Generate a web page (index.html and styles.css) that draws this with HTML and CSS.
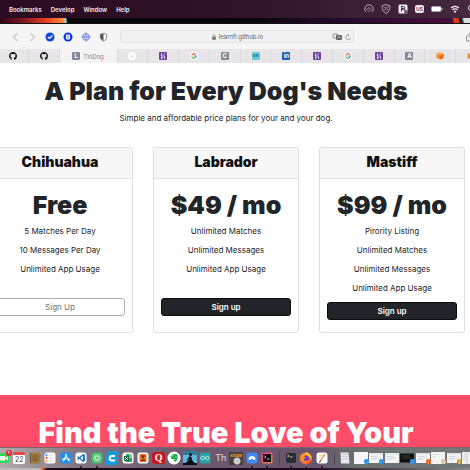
FILE: index.html
```
<!DOCTYPE html>
<html lang="en">
<head>
<meta charset="utf-8">
<title>TinDog</title>
<link rel="stylesheet" href="styles.css">
</head>
<body>
<svg class="defs" aria-hidden="true">
  <defs>
    <linearGradient id="flame" x1="0" y1="0" x2="1" y2="1"><stop offset="0" stop-color="#ffb52b"/><stop offset="1" stop-color="#f0402c"/></linearGradient>
    <linearGradient id="neon" x1="0" y1="0" x2="1" y2="1"><stop offset="0" stop-color="#e03aa8"/><stop offset="1" stop-color="#f28b30"/></linearGradient>
    <symbol id="github" viewBox="0 0 16 16"><path fill="#111" d="M8 0C3.58 0 0 3.58 0 8c0 3.54 2.29 6.53 5.47 7.59.4.07.55-.17.55-.38v-1.34c-2.01.37-2.53-.49-2.69-.94-.09-.23-.48-.94-.82-1.13-.28-.15-.68-.52-.01-.53.63-.01 1.08.58 1.23.82.72 1.21 1.87.87 2.33.66.07-.52.28-.87.51-1.07-1.78-.2-3.64-.89-3.64-3.95 0-.87.31-1.59.82-2.15-.08-.2-.36-1.02.08-2.12 0 0 .67-.21 2.2.82a7.6 7.6 0 0 1 4 0c1.53-1.04 2.2-.82 2.2-.82.44 1.1.16 1.92.08 2.12.51.56.82 1.27.82 2.15 0 3.07-1.87 3.75-3.65 3.95.29.25.54.73.54 1.48v2.2c0 .21.15.46.55.38A8 8 0 0 0 16 8c0-4.42-3.58-8-8-8z"/></symbol>
    <symbol id="google" viewBox="0 0 16 16"><circle cx="8" cy="8" r="8" fill="#fff"/><g fill="none" stroke-width="2.2"><path stroke="#ea4335" d="M4.2 5.8A4.4 4.4 0 0 1 11.2 5"/><path stroke="#fbbc05" d="M4.2 5.8a4.4 4.4 0 0 0 0 4.4"/><path stroke="#34a853" d="M4.2 10.2a4.4 4.4 0 0 0 6.8 1.1"/><path stroke="#4285f4" d="M8 8h4.4a4.4 4.4 0 0 1-1.4 3.3"/></g></symbol>
    <symbol id="heroku" viewBox="0 0 16 16"><rect width="16" height="16" rx="2" fill="#6a45a0"/><path d="M5 2.5v6.2c4-1.6 6-1 6 1v4M11 2.5c0 1.4-.6 2.4-1.4 3M5 10.5v3.2l2-1.6z" fill="none" stroke="#fff" stroke-width="1.6"/></symbol>
    <symbol id="cube" viewBox="0 0 16 16"><path fill="#f58a1f" d="M1 4l7-3 7 3v8l-7 3-7-3z"/><path fill="#ffad42" d="M1 4l7-3 7 3-7 3z"/><path fill="#e8691c" d="M8 7l7-3v8l-7 3z"/></symbol>
    <symbol id="window" viewBox="0 0 28 20"><rect width="28" height="20" fill="#f4f4f5"/><path stroke="#bfc2c8" d="M0 2h28M3 7h14M3 10h20M3 13h11"/></symbol>
  </defs>
</svg>

<header class="menubar">
  <nav class="menus"><a href="#">Bookmarks</a><a href="#">Develop</a><a href="#">Window</a><a href="#">Help</a></nav>
  <div class="status">
    <svg viewBox="0 0 20 20"><g fill="none" stroke="#c9c0cb" stroke-width="1.7"><path d="M4 16A8.5 8.5 0 1 1 16 16M5 12l5-5 5 5M8 15l2-2 2 2"/></g></svg>
    <svg viewBox="0 0 20 20"><g fill="none" stroke="#c9c0cb" stroke-width="1.7"><path d="M10 1l8 3c0 8-3 12-8 15C5 16 2 12 2 4z"/><path d="M6 13l8-8M7 8l2-2M11 13l3-3"/></g></svg>
    <svg viewBox="0 0 20 20"><rect x="1" y="1" width="18" height="18" rx="3" fill="#f0edf0"/><path d="M7 15V5h4a2.5 2.5 0 0 1 0 5H7h5a2.5 2.5 0 0 1 2 4" fill="none" stroke="#33212f" stroke-width="2"/><circle cx="16" cy="16" r="4" fill="#67596a"/></svg>
    <span class="lang">US</span>
    <svg class="battery" viewBox="0 0 24 12"><rect x="1" y="1" width="19" height="10" rx="2" fill="#fff" stroke="#bbb0bb"/><path d="M22 4v4" stroke="#d0c8d0" stroke-width="2"/></svg>
    <svg viewBox="0 0 20 20"><g fill="none" stroke="#f2edf2" stroke-width="2.5"><path d="M2 8a11 11 0 0 1 16 0M5 12a7 7 0 0 1 10 0"/></g><circle cx="10" cy="15.500" r="2" fill="#fff"/></svg>
    <svg viewBox="0 0 20 20"><circle cx="8" cy="8" r="5" fill="none" stroke="#eee" stroke-width="2"/><path d="M12 12l5 5" stroke="#eee" stroke-width="2"/></svg>
  </div>
</header>
<div class="wallpaper"></div>

<div class="toolbar">
  <div class="tools">
    <svg class="arrow" viewBox="0 0 8 10"><path d="M6 1L2 5l4 4"/></svg>
    <svg class="arrow" viewBox="0 0 8 10"><path d="M2 1l4 4-4 4"/></svg>
    <svg viewBox="0 0 10 10"><circle cx="5" cy="5" r="4.500" fill="#1048d8"/><path d="M3 5l1.500 1.500L7.500 3.500" fill="none" stroke="#fff" stroke-width="1.200"/></svg>
    <svg viewBox="0 0 10 10"><circle cx="5" cy="5" r="4.500" fill="#1238e0"/><rect x="3" y="2.500" width="4" height="5" rx="1" fill="#fff"/><path d="M4 4h2M4 6h2" stroke="#1238e0" stroke-width=".7"/></svg>
    <svg viewBox="0 0 10 10"><g fill="none" stroke="#5b74ee" stroke-width=".9"><circle cx="5" cy="5" r="3.300"/><circle cx="5" cy="5" r="1.300"/><path d="M5 .5v3M5 6.500v3M.5 5h3M6.500 5h3"/></g></svg>
    <svg class="shield" viewBox="0 0 10 10"><path d="M5 1l3.500 1v3c0 2-1.500 3.500-3.500 4.500C3 8.500 1.500 7 1.500 5V2z" fill="#fff" stroke="#666" stroke-width=".8"/><path d="M5 1v8.500C3 8.500 1.500 7 1.500 5V2z" fill="#555"/></svg>
  </div>
  <div class="address">
    <svg viewBox="0 0 8 8"><rect x="1.500" y="3.500" width="5" height="4" rx=".6" fill="#777"/><path d="M2.600 4V2.400a1.400 1.400 0 0 1 2.800 0V4" fill="none" stroke="#777" stroke-width=".8"/></svg>
    <span>learnfl.github.io</span>
    <svg class="page-tools" viewBox="0 0 20 8"><rect x="1" y="1" width="5" height="4" rx="1" fill="none" stroke="#777" stroke-width=".8"/><rect x="4" y="2" width="6" height="5" rx="1" fill="#666"/><path d="M5.500 5.500l1.500-2.500 1.500 2.500" fill="none" stroke="#eee" stroke-width=".6"/><path d="M18.500 4.500A2.400 2.400 0 1 1 16.500 2M15.500 .5l1.500 1.500-1.500 1.200" fill="none" stroke="#999" stroke-width=".8"/></svg>
  </div>
  <svg class="share" viewBox="0 0 10 10"><path d="M3.500 4H1.500v5h7V4H6.500M5 6.500V.8M3.200 2.500L5 .8l1.800 1.700" fill="none" stroke="#777" stroke-width=".8"/></svg>
</div>

<nav class="tabs">
  <a href="#"><svg><use href="#github"/></svg></a>
  <a href="#"><svg><use href="#github"/></svg></a>
  <a href="#" class="current"><span class="tile gray">L</span>TinDog</a>
  <a href="#"><svg viewBox="0 0 16 16"><circle cx="8" cy="8" r="8" fill="#fff"/><path d="M4 9l3 2 5-6M9 10l3-3" fill="none" stroke="#a9dfea" stroke-width="1.500"/></svg></a>
  <a href="#"><svg><use href="#heroku"/></svg></a>
  <a href="#"><svg><use href="#google"/></svg></a>
  <a href="#"><span class="tile gray">C</span></a>
  <a href="#"><span class="tile aqua">DR</span></a>
  <a href="#"><span class="tile blue">in</span></a>
  <a href="#"><svg><use href="#heroku"/></svg></a>
  <a href="#"><svg><use href="#google"/></svg></a>
  <a href="#"><svg><use href="#heroku"/></svg></a>
  <a href="#"><span class="tile gray">A</span></a>
  <a href="#"><svg><use href="#cube"/></svg></a>
  <a href="#"><svg><use href="#cube"/></svg></a>
</nav>

<main class="pricing">
  <h1>A Plan for Every Dog's Needs</h1>
  <p class="lead">Simple and affordable price plans for your and your dog.</p>
  <div class="plans">
    <section class="plan">
      <h2>Chihuahua</h2>
      <div class="body">
        <p class="price">Free</p>
        <p>5 Matches Per Day</p>
        <p>10 Messages Per Day</p>
        <p>Unlimited App Usage</p>
        <button class="outline spaced" type="button">Sign Up</button>
      </div>
    </section>
    <section class="plan">
      <h2>Labrador</h2>
      <div class="body">
        <p class="price">$49 / mo</p>
        <p>Unlimited Matches</p>
        <p>Unlimited Messages</p>
        <p>Unlimited App Usage</p>
        <button class="spaced" type="button">Sign up</button>
      </div>
    </section>
    <section class="plan">
      <h2>Mastiff</h2>
      <div class="body">
        <p class="price">$99 / mo</p>
        <p>Pirority Listing</p>
        <p>Unlimited Matches</p>
        <p>Unlimited Messages</p>
        <p>Unlimited App Usage</p>
        <button type="button">Sign up</button>
      </div>
    </section>
  </div>
</main>

<section class="cta"><h2>Find the True Love of Your</h2></section>

<footer class="dock">
  <div class="shelf">
    <span class="app"><svg viewBox="0 0 24 24"><rect x="1" y="2" width="22" height="20" rx="5" fill="#2fd84c"/><rect x="4" y="8" width="11" height="9" rx="2" fill="#fff"/><path d="M16 11l4-3v9l-4-3z" fill="#fff"/></svg><b class="badge">1</b></span>
    <span class="app"><span class="calendar">22</span></span>
    <span class="app"><svg viewBox="0 0 24 24"><rect x="1" y="1" width="22" height="22" rx="4" fill="#9c7a40"/><path d="M3 2v20" stroke="#7a5c2c" stroke-width="2"/><circle cx="13" cy="12" r="6" fill="none" stroke="#735528" stroke-width="1.500"/><circle cx="13" cy="10" r="2" fill="#735528"/><path d="M9 15h8" stroke="#735528" stroke-width="2"/></svg></span>
    <span class="app"><svg viewBox="0 0 24 24"><rect x="1" y="1" width="22" height="22" rx="5" fill="#fff"/><circle cx="5" cy="6" r="2" fill="#3b82f6"/><circle cx="5" cy="12" r="2" fill="#ef4444"/><circle cx="5" cy="18" r="2" fill="#f59e0b"/><path d="M9 6h11M9 12h11M9 18h11" stroke="#c4c4c8" stroke-width="1.500"/></svg></span>
    <span class="app"><svg viewBox="0 0 24 24"><rect x="1" y="1" width="22" height="22" rx="5" fill="#1c8ff5"/><path d="M13 5L7 18M11 5l7 13M4 14h9M16 14h4" stroke="#fff" stroke-width="2.200" stroke-linecap="round"/></svg></span>
    <span class="app on"><svg viewBox="0 0 24 24"><rect x="1" y="1" width="22" height="22" rx="5" fill="#fff"/><path d="M17 5L5 15M17 19L5 9" stroke="#1679c7" stroke-width="2.800"/><path d="M16 4l4 2v12l-4 2z" fill="#1679c7"/></svg></span>
    <span class="app on"><svg viewBox="0 0 24 24"><rect x="1" y="1" width="22" height="22" rx="5" fill="#43b96d"/><g fill="none" stroke="#c8f3d5" stroke-width="1.300"><ellipse cx="12" cy="12" rx="8" ry="3"/><ellipse cx="12" cy="12" rx="8" ry="3" transform="rotate(60 12 12)"/><ellipse cx="12" cy="12" rx="8" ry="3" transform="rotate(120 12 12)"/></g></svg></span>
    <span class="app"><svg class="large" viewBox="0 0 28 28"><path d="M7 1l20-1-2 24-3 4H1L3 6z" fill="#129cdf"/><path d="M20 10h-6a4 4 0 0 0 0 9h6" fill="none" stroke="#fff" stroke-width="4"/></svg></span>
    <span class="app"><svg viewBox="0 0 24 24"><rect x="1" y="1" width="22" height="22" rx="5" fill="#fff"/><rect x="8" y="4" width="12" height="16" fill="#2fa565"/><path d="M14 4h6v8h-6z" fill="#79cf98"/><rect x="4" y="8" width="10" height="10" fill="#13683a"/><path d="M6 10l6 6M12 10l-6 6" stroke="#fff" stroke-width="1.500"/></svg></span>
    <span class="app"><svg viewBox="0 0 24 24"><rect x="1" y="1" width="22" height="22" rx="5" fill="#fff"/><path d="M5 4h14v16H5z" fill="#f26b21"/><path d="M12 7v6M9 8h6M8 16h8" stroke="#542211" stroke-width="2.500"/></svg></span>
    <span class="app"><span class="quora">Q</span></span>
    <span class="app"><svg class="large" viewBox="0 0 28 28"><circle cx="14" cy="14" r="13" fill="#fff"/><path d="M7 11l5-5h6c3 0 4 4 3 9-1 7-7 8-7 4 0-2 2-3 4-2-3-3-5 1-8-1-2-1-3-3-3-5z" fill="#1aaf49"/><path d="M8 10h4V6" fill="none" stroke="#fff"/><circle cx="18" cy="12" r="1.200" fill="#fff"/></svg></span>
    <span class="app"><svg class="large" viewBox="0 0 28 28"><rect width="28" height="28" fill="#62b5dc"/><rect width="28" height="8" fill="#317c9e"/><circle cx="15" cy="7" r="3" fill="#071016"/><path d="M12 10l5 2 1 6 5 6H4l8-5zM0 24h28v4H0z" fill="#071016"/><path d="M13 12l-5 6 7 1" fill="none" stroke="#071016" stroke-width="2"/></svg></span>
    <span class="app"><svg viewBox="0 0 24 24"><rect x="1" y="1" width="22" height="22" rx="5" fill="#2aa2a4"/><path d="M12 12c-3-5-8-4-8 0s5 5 8 0 8-4 8 0-5 5-8 0z" fill="none" stroke="#d5f7f4" stroke-width="2"/></svg></span>
    <span class="app"><span class="thonny">Th</span></span>
    <span class="app"><span class="kindle">kindle</span></span>
    <span class="app on"><svg viewBox="0 0 24 24"><rect x="1" y="1" width="22" height="22" rx="5" fill="#4388f5"/><path d="M5 15a7 7 0 0 1 14 0l-4 1a3 3 0 0 0-6 0z" fill="#fff"/></svg></span>
    <span class="app on"><svg viewBox="0 0 24 24"><rect x="1" y="1" width="22" height="22" rx="4" fill="url(#neon)"/><rect x="4" y="4" width="16" height="16" fill="#130d12"/><path d="M7 8l3 2-3 2M12 14h5" fill="none" stroke="#fff" stroke-width="1.500"/></svg></span>
    <i class="rule"></i>
    <span class="app on"><svg viewBox="0 0 24 24"><rect x="1" y="1" width="22" height="22" rx="5" fill="#292c2f" stroke="#777"/><path d="M5 6l3 2-3 2M10 10h5" fill="none" stroke="#fff" stroke-width="1.500"/></svg></span>
    <span class="app on"><svg class="large" viewBox="0 0 28 28"><circle cx="14" cy="15" r="12" fill="url(#flame)"/><path d="M13 2c7 2 13 7 12 16-2-5-5-8-10-10z" fill="#ffcd36"/><circle cx="14" cy="15" r="6" fill="#6940b8"/><path d="M3 8l6 2 5 3-5 3c2 5 8 5 11 1-1 6-8 8-13 4-4-3-5-8-4-13z" fill="#ff8b25"/></svg></span>
    <span class="app on"><svg viewBox="0 0 24 24"><rect x="1" y="1" width="22" height="22" rx="5" fill="#fff"/><path d="M5 7h9M5 12h5" stroke="#f3bd7d" stroke-width="1.500"/><path d="M18 4L8 19" stroke="#ed8c26" stroke-width="2.500"/><path d="M9 17l-2 4" stroke="#333" stroke-width="2"/></svg></span>
    <i class="rule"></i>
    <span class="app"><svg viewBox="0 0 24 24"><path d="M3 1h16l2 22H4z" fill="#e9e9ee"/><path d="M4 5h14M5 9h6M13 9h5M6 14h12" stroke="#aeb0b9"/></svg></span>
    <span class="app preview"><svg class="wide" viewBox="0 0 28 24"><rect width="28" height="24" fill="#f6f6fa"/></svg><b class="blue"></b></span>
    <span class="app preview"><svg class="wide"><use href="#window"/></svg><b class="blue"></b></span>
    <span class="app preview"><svg class="wide"><use href="#window"/></svg></span>
    <span class="app preview"><svg class="wide" viewBox="0 0 28 20"><rect y="1" width="28" height="18" fill="#111"/><path d="M3 6h16M3 10h20" stroke="#666"/></svg><b class="blue"></b></span>
    <span class="app preview"><svg class="wide"><use href="#window"/></svg><b class="orange"></b></span>
    <span class="app preview"><svg class="wide" viewBox="0 0 28 24"><rect width="28" height="24" fill="#f3f3f1"/><path d="M3 5h12M3 9h8" stroke="#ccc"/></svg><b class="cream"></b></span>
    <span class="app preview"><svg class="wide"><use href="#window"/></svg><b class="green"></b></span>
    <span class="app preview"><svg class="wide" viewBox="0 0 28 24"><rect width="28" height="24" fill="#efeff0"/><path d="M3 5h4M3 10h4M3 15h4M10 0v24" stroke="#aaa"/></svg></span>
  </div>
</footer>
</body>
</html>
```
FILE: styles.css
```
* { box-sizing: border-box; }
body {
  margin: 0;
  height: 100vh;
  display: flex;
  flex-direction: column;
  overflow: hidden;
  background: #fff;
  color: #212529;
  font-family: Inter, sans-serif;
  font-size: 8px;
}
h1, h2, p { margin: 0; }
a { color: inherit; text-decoration: none; }
svg { display: block; flex: none; }
.defs { position: absolute; width: 0; height: 0; }

/* System menu bar */
.menubar {
  flex: none;
  height: 18px;
  display: flex;
  justify-content: space-between;
  align-items: center;
  padding-left: 9px;
  background: linear-gradient(90deg, #2b0b21, #2d1226 45%, #44283e);
  color: #f3edf2;
}
.menus { display: flex; gap: 9px; font-size: 6px; font-weight: 600; }
.status { display: flex; align-items: center; gap: 7px; margin-right: -7px; }
.status svg { width: 10px; height: 10px; }
.status .battery { width: 12px; height: 6px; }
.lang { padding: 0 1px; border-radius: 2px; background: #eee9ee; color: #66566a; font-size: 5px; line-height: 8px; font-weight: 700; }
.wallpaper {
  flex: none;
  height: 6px;
  border-bottom: 1px solid #111;
  background:
    linear-gradient(75deg, transparent 438px, #e63818 439px, #e63818 443px, #222 445px, #222 447px, #ddd 449px),
    linear-gradient(80deg, #2a0514, #741420 20px, #e23a1e 45px, #ff8a3a 63px, #8ee4ee 65px, #080808 67px, #080808 250px, #2b0b32 350px, #4c0d3e);
}

/* Browser chrome */
.toolbar {
  flex: none;
  height: 25px;
  display: flex;
  align-items: center;
  gap: 7px;
  padding-left: 11px;
  background: #f6f5f6;
}
.tools { display: flex; align-items: center; gap: 8px; width: 102px; }
.tools svg { width: 10px; height: 10px; }
.tools .arrow { width: 9px; fill: none; stroke: #aaa; }
.tools .shield { width: 9px; }
.address {
  flex: 1;
  position: relative;
  display: flex;
  justify-content: center;
  align-items: center;
  gap: 2px;
  height: 13px;
  border: 1px solid #e5e4e5;
  border-radius: 3px;
  background: #f2f1f2;
  color: #5c5b5e;
  font-size: 6px;
}
.address svg { width: 6px; height: 6px; }
.address .page-tools { position: absolute; right: 1px; width: 20px; height: 8px; }
.share { width: 10px; height: 10px; margin: 0 -5px 0 104px; }
.tabs { flex: none; display: flex; height: 14px; margin: 0 -17px 0 -2px; background: #e7e5e7; }
.tabs a {
  flex: 1;
  display: flex;
  justify-content: center;
  align-items: center;
  gap: 3px;
  border-right: 1px solid #dbd9dc;
  color: #858287;
  font-size: 6px;
}
.tabs .current { flex: none; width: 58px; background: #f5f4f5; }
.tabs svg { width: 8px; height: 8px; }
.tile { width: 8px; border-radius: 1px; color: #fff; font-size: 6px; line-height: 8px; font-weight: 700; text-align: center; }
.gray { background: #858895; }
.tile.aqua { background: #67cbd4; color: #276a9b; font-size: 4px; }
.tile.blue { background: #1762b8; }

/* Pricing */
.pricing { flex: none; margin: 0 5px 0 -13px; padding: 13px 0 62px; text-align: center; }
h1 { font-size: 25px; line-height: 30px; font-weight: 900; white-space: nowrap; }
.lead { margin-top: 6px; line-height: 12px; }
.plans { display: grid; grid-template-columns: repeat(3, 1fr); gap: 20px; margin-top: 23px; }
.plan { border: 1px solid #e0e0e0; border-radius: 3px; overflow: hidden; }
.plan h2 { height: 31px; border-bottom: 1px solid #e2e2e2; background: #f7f7f7; font-size: 14px; line-height: 27px; font-weight: 900; color: #101114; }
.body { padding: 10px 7px 12px; }
.body p { line-height: 19px; }
.body .price { font-size: 25px; line-height: 33px; font-weight: 900; }
button {
  display: block;
  width: 100%;
  height: 18px;
  margin-top: 4px;
  padding: 0;
  border: 1px solid #090b0d;
  border-radius: 3px;
  background: #212529;
  color: #fff;
  font: 600 8px Inter, sans-serif;
}
.spaced { margin-top: 19px; }
.outline { border-color: #aaaeb2; background: #fff; color: #6c757d; font-weight: 400; }

.cta { flex: 1; padding: 22px 5px 0 0; background: #ff4c68; color: #fff; text-align: center; }
.cta h2 { margin-left: -13px; font-size: 29px; line-height: 32px; font-weight: 900; white-space: nowrap; }

/* Dock */
.dock {
  position: fixed;
  right: 0;
  bottom: 0;
  left: 0;
  padding-bottom: 2px;
  overflow: hidden;
  background: linear-gradient(90deg, #bbb 40px, #f05c24 43px, #170817 47px, #1e0820 310px, #888);
}
.shelf {
  display: flex;
  align-items: center;
  height: 21px;
  margin: 0 -7px 0 -4px;
  border-top: 1px solid #7d6570;
  background: linear-gradient(90deg, #b5aeb0, #827681 80px, #6d5a70 180px, #68556d 320px, #687070 360px, #727877);
}
.app { position: relative; flex: 1; display: flex; justify-content: center; }
.app svg { width: 12px; height: 12px; }
.app .large { width: 14px; height: 14px; }
.app .wide { width: 14px; height: 12px; }
.rule { width: 8px; height: 14px; background: linear-gradient(90deg, transparent 4px, #514455 4px, #514455 5px, transparent 5px); }
.on::after { content: ""; position: absolute; bottom: -4px; width: 2px; height: 2px; border-radius: 1px; background: #171318; }
.badge { position: absolute; top: -2px; right: 0; width: 6px; border-radius: 3px; background: #e92228; color: #fff; font-size: 4px; line-height: 6px; text-align: center; }
.calendar { width: 12px; border-top: 3px solid #e44846; border-radius: 2px; background: #fff; color: #444; font-size: 7px; line-height: 9px; text-align: center; }
.quora { width: 13px; border-radius: 3px; background: #c8171e; color: #fff; font: 900 10px/12px "Liberation Serif", serif; text-align: center; }
.thonny { color: #e2dce5; font-size: 9px; line-height: 12px; }
.kindle { width: 14px; height: 13px; background: radial-gradient(circle at 8px 9px, #ccc 3px, #46413f 4px); color: #f29a25; font-size: 4px; line-height: 8px; font-weight: 700; text-align: center; }
.preview b { position: absolute; right: 0; bottom: 0; width: 5px; height: 5px; border-radius: 2px; }
.preview .blue { background: #3494e8; }
.preview .orange { background: #f36a29; }
.preview .cream { background: #e5c89d; }
.preview .green { background: linear-gradient(90deg, #e44b3e, #f0c330, #39a35b); }
```
